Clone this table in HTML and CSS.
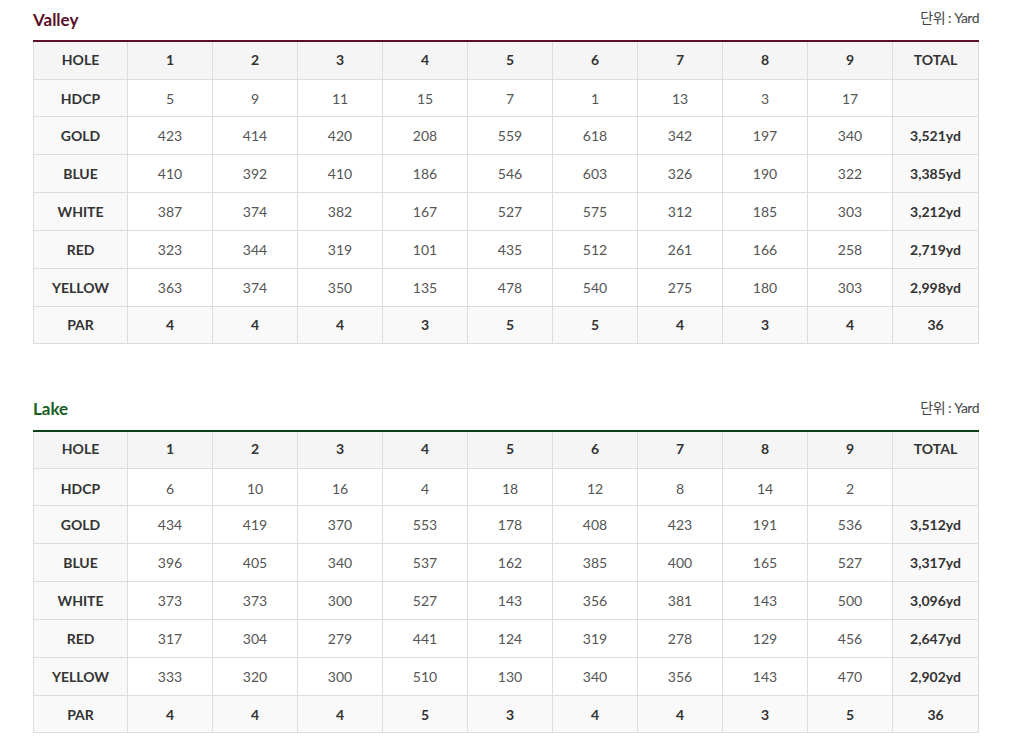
FILE: index.html
```html
<!DOCTYPE html>
<html lang="ko">
<head>
<meta charset="utf-8">
<title>Course</title>
<link rel="stylesheet" href="styles.css">
</head>
<body>
<div class="wrap">
  <section class="course valley">
    <div class="course-head">
      <h2 class="course-title">Valley</h2>
      <span class="unit">단위 : Yard</span>
    </div>
    <table class="score">
      <thead>
        <tr><th class="lbl">HOLE</th><th>1</th><th>2</th><th>3</th><th>4</th><th>5</th><th>6</th><th>7</th><th>8</th><th>9</th><th class="tot">TOTAL</th></tr>
      </thead>
      <tbody>
        <tr class="hdcp"><th class="lbl">HDCP</th><td>5</td><td>9</td><td>11</td><td>15</td><td>7</td><td>1</td><td>13</td><td>3</td><td>17</td><td class="tot"></td></tr>
        <tr><th class="lbl">GOLD</th><td>423</td><td>414</td><td>420</td><td>208</td><td>559</td><td>618</td><td>342</td><td>197</td><td>340</td><td class="tot">3,521yd</td></tr>
        <tr><th class="lbl">BLUE</th><td>410</td><td>392</td><td>410</td><td>186</td><td>546</td><td>603</td><td>326</td><td>190</td><td>322</td><td class="tot">3,385yd</td></tr>
        <tr><th class="lbl">WHITE</th><td>387</td><td>374</td><td>382</td><td>167</td><td>527</td><td>575</td><td>312</td><td>185</td><td>303</td><td class="tot">3,212yd</td></tr>
        <tr><th class="lbl">RED</th><td>323</td><td>344</td><td>319</td><td>101</td><td>435</td><td>512</td><td>261</td><td>166</td><td>258</td><td class="tot">2,719yd</td></tr>
        <tr><th class="lbl">YELLOW</th><td>363</td><td>374</td><td>350</td><td>135</td><td>478</td><td>540</td><td>275</td><td>180</td><td>303</td><td class="tot">2,998yd</td></tr>
        <tr class="par"><th class="lbl">PAR</th><td>4</td><td>4</td><td>4</td><td>3</td><td>5</td><td>5</td><td>4</td><td>3</td><td>4</td><td class="tot">36</td></tr>
      </tbody>
    </table>
  </section>

  <section class="course lake">
    <div class="course-head">
      <h2 class="course-title">Lake</h2>
      <span class="unit">단위 : Yard</span>
    </div>
    <table class="score">
      <thead>
        <tr><th class="lbl">HOLE</th><th>1</th><th>2</th><th>3</th><th>4</th><th>5</th><th>6</th><th>7</th><th>8</th><th>9</th><th class="tot">TOTAL</th></tr>
      </thead>
      <tbody>
        <tr class="hdcp"><th class="lbl">HDCP</th><td>6</td><td>10</td><td>16</td><td>4</td><td>18</td><td>12</td><td>8</td><td>14</td><td>2</td><td class="tot"></td></tr>
        <tr><th class="lbl">GOLD</th><td>434</td><td>419</td><td>370</td><td>553</td><td>178</td><td>408</td><td>423</td><td>191</td><td>536</td><td class="tot">3,512yd</td></tr>
        <tr><th class="lbl">BLUE</th><td>396</td><td>405</td><td>340</td><td>537</td><td>162</td><td>385</td><td>400</td><td>165</td><td>527</td><td class="tot">3,317yd</td></tr>
        <tr><th class="lbl">WHITE</th><td>373</td><td>373</td><td>300</td><td>527</td><td>143</td><td>356</td><td>381</td><td>143</td><td>500</td><td class="tot">3,096yd</td></tr>
        <tr><th class="lbl">RED</th><td>317</td><td>304</td><td>279</td><td>441</td><td>124</td><td>319</td><td>278</td><td>129</td><td>456</td><td class="tot">2,647yd</td></tr>
        <tr><th class="lbl">YELLOW</th><td>333</td><td>320</td><td>300</td><td>510</td><td>130</td><td>340</td><td>356</td><td>143</td><td>470</td><td class="tot">2,902yd</td></tr>
        <tr class="par"><th class="lbl">PAR</th><td>4</td><td>4</td><td>4</td><td>5</td><td>3</td><td>4</td><td>4</td><td>3</td><td>5</td><td class="tot">36</td></tr>
      </tbody>
    </table>
  </section>
</div>
</body>
</html>
```

FILE: styles.css
```css
* { box-sizing: border-box; }
html, body { margin: 0; padding: 0; background: #fff; }
body {
  font-family: Lato, "Noto Sans CJK KR", sans-serif;
  color: #333;
}
.wrap {
  width: 946px;
  margin-left: 33px;
}
.course + .course { margin-top: 46px; }
.course-head {
  height: 40px;
  display: flex;
  align-items: center;
  justify-content: space-between;
  padding-bottom: 2px;
}
.course-title {
  margin: 0;
  font-size: 17px;
  font-weight: 700;
}
.valley .course-title { color: #5a1028; }
.lake .course-title { color: #17601f; }
.unit {
  font-size: 14px;
  color: #444;
  letter-spacing: -0.5px;
  margin-top: -4px;
}
.score {
  width: 946px;
  border-collapse: collapse;
  table-layout: fixed;
  font-size: 14px;
}
.valley .score { border-top: 2px solid #5e0e2c; }
.lake .score { border-top: 2px solid #0d4019; }
.score th, .score td {
  border: 1px solid #ddd;
  text-align: center;
  height: 38px;
  padding: 0;
}
.score tr.hdcp th, .score tr.hdcp td,
.score tr.par th, .score tr.par td { height: 37px; }
.score tr.hdcp th, .score tr.hdcp td { padding-top: 2px; }
.score th:first-child, .score td:first-child { width: 94px; }
.score th.tot, .score td.tot { width: 86px; }
.score thead th {
  background: #f5f5f5;
  font-weight: 700;
  color: #333;
  height: 38px;
  padding-bottom: 2px;
  border-bottom: 1px solid #ddd;
  border-top: 0;
}
.score tbody th.lbl {
  background: #f9f9f9;
  font-weight: 700;
  color: #333;
}
.score td { color: #555; background: #fff; }
.score td.tot { background: #f9f9f9; font-weight: 700; color: #333; }
.score tr.par td { font-weight: 700; color: #333; background: #f9f9f9; }
```
